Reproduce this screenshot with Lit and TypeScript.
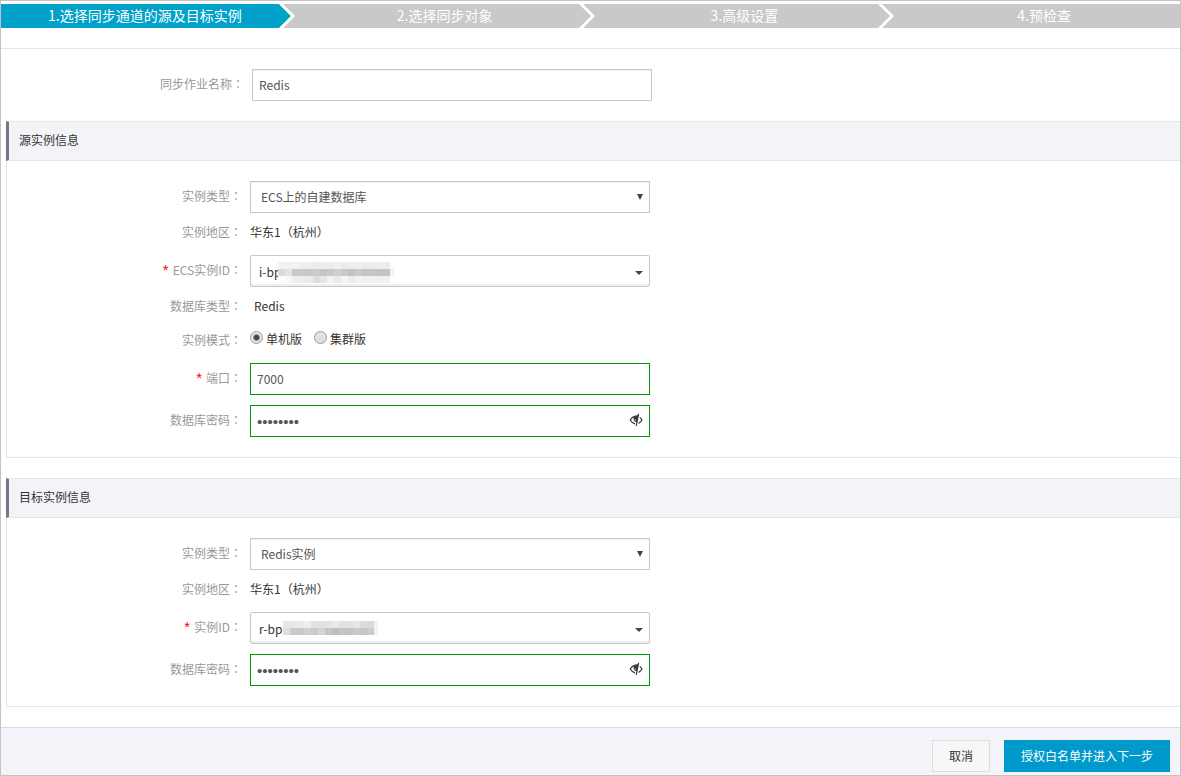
import { LitElement, html, svg, css } from "lit";
import { customElement, property, state } from "lit/decorators.js";

const STEPS = ["1.选择同步通道的源及目标实例", "2.选择同步对象", "3.高级设置", "4.预检查"];

/* Rows of 7px cells that hide the tail of an instance ID. */
const MASK_SOURCE = [
  ["#f3f3f3", "#f1f1f1", "#f2f2f2", "#eeeeee", "#efefef", "#ebebeb", "#eeeeee", "#ebebeb", "#f0f0f0", "#ebebeb", "#eeeeee", "#eeeeee", "#ebebeb", "#ececec", "#eeeeee", "#ebebeb", "#fcfcfc"],
  ["#dadada", "#e4e4e4", "#c8c8c8", "#c9c9c9", "#c6c6c6", "#cbcbcb", "#c4c6c6", "#c8c8c8", "#d0d0d0", "#c9c9c9", "#c4c2be", "#c6caca", "#c0c4c6", "#c6c6c6", "#c4c4c4", "#c4c4c4", "#f2f2f2"],
  ["#fbfbfb", "#f8f8f8", "#eeeeee", "#ececec", "#ebebeb", "#dedede", "#e6e6e6", "#f2f2f2", "#e9e9e9", "#f4f4f4", "#ebebeb", "#f2f2f2", "#f0f0f0", "#f0f0f0", "#f0f0f0", "#f0f0f0", "#fefefe"],
];
const MASK_TARGET = [
  ["#e6e6e6", "#e8e8e8", "#ebebeb", "#eeeeee", "#e2e2e2", "#e0e0e4", "#e4e4e4", "#e9e9e9", "#e2e2e2", "#e2e2e2", "#e6e6e6", "#dcdcdc", "#dadada", "#f4f4f4"],
  ["#dedede", "#cacaca", "#c8c8cc", "#d0d0d0", "#cccac4", "#d4d4d4", "#c6c6ca", "#c4bcb8", "#c6c6c6", "#c2c2c2", "#cacaca", "#c6c6c6", "#cccccc", "#f0f0f0"],
];

@customElement("step-bar")
class StepBar extends LitElement {
  @property({ type: Number }) current = 0;

  static styles = css`
    :host { display: block; overflow: hidden; }
    .steps {
      display: grid;
      grid-template-columns: repeat(4, 1fr);
      margin: 0 -14px 0 -6px;
      padding: 0;
      list-style: none;
    }
    .step {
      position: relative;
      padding-bottom: 2px;
      background: #c9c9c9;
      color: #fff;
      font-size: 14px;
      line-height: 22px;
      text-align: center;
      white-space: nowrap;
    }
    .on { background: #00a2ca; }
    .arrow { position: absolute; top: 0; right: 0; width: 16px; height: 24px; }
    .next { fill: #c9c9c9; }
    .fill { fill: #c9c9c9; }
    .on .fill { fill: #00a2ca; }
    .edge { fill: #fff; }
  `;

  render() {
    return html`<ol class="steps">
      ${STEPS.map(
        (s, i) => html`<li class="step ${i === this.current ? "on" : ""}">
          ${s}${i < STEPS.length - 1
            ? html`<svg class="arrow" viewBox="0 0 16 24" aria-hidden="true">
                <path class="next" d="M0 0h16v24H0z" />
                <path class="fill" d="M0 0l12 12L0 24z" />
                <path class="edge" d="M0 0h4l12 12L4 24H0l12-12z" />
              </svg>`
            : ""}
        </li>`
      )}
    </ol>`;
  }
}

@customElement("app-root")
class AppRoot extends LitElement {
  @state() private mode = "single";

  static styles = css`
    :host {
      display: block;
      box-sizing: border-box;
      min-height: 100vh;
      border: 1px solid #c3c3c3;
      padding-top: 3px;
      background: #fff;
      color: #333;
      font: 12px/28px "Noto Sans CJK SC", sans-serif;
    }
    *, *::before, *::after { box-sizing: border-box; }
    .top { margin-top: 20px; padding: 15px 0; border-top: 1px solid #e1e6eb; }
    .row { display: flex; gap: 8px; min-height: 32px; }
    .label { flex: none; width: 235px; color: #999; text-align: right; white-space: nowrap; }
    .top .label { width: 243px; }
    .wide { font-family: "Noto Sans CJK TC", sans-serif; }
    .star { margin-right: 4px; color: #f00; font-family: "Liberation Sans", sans-serif; font-size: 15px; line-height: 1; }
    .field { padding: 5px 0; }
    .field .label { line-height: 30px; }
    .modes { min-height: 34px; }
    .modes .label, .option { line-height: 32px; }
    .option { line-height: 30px; }
    .inset { padding-left: 4px; }
    .box { position: relative; flex: 0 1 400px; min-width: 0; }
    .input {
      display: block;
      width: 100%;
      height: 32px;
      margin: 0;
      padding: 0 6px 2px;
      border: 1px solid #c8c8c8;
      border-radius: 0;
      outline: 0;
      appearance: none;
      background: #fff;
      box-shadow: inset 0 1px 1px #eee;
      color: #555;
      font: inherit;
    }
    .select { padding: 0 10px; }
    .combo { padding: 2px 8px 0; border-radius: 2px; box-shadow: inset 0 -2px 1px #eee; color: #333; }
    .valid { border-color: #090; box-shadow: none; }
    .secret { padding: 0 6px; font-family: "Liberation Sans", sans-serif; font-size: 15px; }
    .mark { position: absolute; top: 0; right: 0; width: 20px; height: 32px; fill: #444; pointer-events: none; }
    .mask { position: absolute; top: 7px; pointer-events: none; }
    .mask-source { left: 28px; }
    .mask-target { top: 9px; left: 33px; }
    .eye {
      position: absolute;
      top: 8px;
      right: 7px;
      width: 14px;
      height: 14px;
      padding: 0;
      border: 0;
      background: none;
      color: #333;
    }
    .eye svg { display: block; }
    .option { display: flex; gap: 3px; margin-right: 4px; }
    .radio {
      width: 13px;
      height: 13px;
      margin: 7px 0 0;
      border: 1px solid #999;
      border-radius: 50%;
      appearance: none;
      background: linear-gradient(#e6e6e6, #dcdcdc);
    }
    .radio:checked { background: radial-gradient(circle, #444 0 2px, #e6e6e6 4px); }
    .section { margin: 0 0 20px 5px; }
    .head {
      margin: 0;
      padding: 0 0 2px 10px;
      border: solid #e1e6eb;
      border-width: 1px 0;
      border-left: 3px solid #778;
      background: #f3f4f8;
      font-size: 12px;
      font-weight: 400;
      line-height: 36px;
    }
    .body { padding: 15px 0; border: solid #e1e6eb; border-width: 0 0 1px 1px; }
    .foot {
      display: flex;
      justify-content: flex-end;
      gap: 14px;
      padding: 12px 10px 3px;
      border-top: 1px solid #d8dbdf;
      background: #f3f4f9;
    }
    .btn {
      height: 32px;
      padding: 0 16px;
      border: 1px solid #ddd;
      background: #f7f7f7;
      color: #333;
      font: inherit;
    }
    .primary { border-color: #09c; background: #09c; color: #fff; }
  `;

  private label(text: string, id: string, required = false) {
    const body = html`${required ? html`<span class="star">*</span>` : ""}${text}<span class="wide">：</span>`;
    return id ? html`<label class="label" for=${id}>${body}</label>` : html`<span class="label">${body}</span>`;
  }

  private select(id: string, value: string) {
    return html`<div class="row field">
      ${this.label("实例类型", id)}
      <div class="box">
        <select class="input select" id=${id}><option>${value}</option></select>
        <svg class="mark" viewBox="0 0 20 32" aria-hidden="true"><path d="M7 13h6l-3 6z" /></svg>
      </div>
    </div>`;
  }

  private combo(id: string, label: string, value: string, cells: string[][], kind: string) {
    return html`<div class="row field">
      ${this.label(label, id, true)}
      <div class="box">
        <select class="input combo" id=${id}><option>${value}</option></select>
        <svg class="mask ${kind}" width=${cells[0].length * 7 - 3} height=${cells.length * 7} shape-rendering="crispEdges" aria-hidden="true">
          ${cells.map((r, y) => r.map((c, x) => svg`<rect x=${x * 7} y=${y * 7} width="7" height="7" fill=${c} />`))}
        </svg>
        <svg class="mark" viewBox="0 0 20 32" aria-hidden="true"><path d="M5 16h8l-4 4z" /></svg>
      </div>
    </div>`;
  }

  private password(id: string) {
    return html`<div class="row field">
      ${this.label("数据库密码", id)}
      <div class="box">
        <input class="input valid secret" id=${id} type="password" value="password" />
        <button class="eye" type="button" aria-label="显示密码">
          <svg width="14" height="14" viewBox="0 0 14 14" fill="none" stroke="currentColor" stroke-width="1.2">
            <path d="M7.500 2.800C4.500 3 2.500 5 1.200 7c1.200 2 2.600 3.200 4.800 3.800" />
            <path d="M10.800 4.400C12 5.400 12.500 6 13 7c-.8 1.500-1.800 2.600-3.400 3.400" />
            <path d="M9.600 .8L7.200 13" />
            <path d="M4.600 4.200L9.200 1.800 7.600 9.200C5.200 8.800 4 6.600 4.600 4.200z" fill="currentColor" stroke="none" />
            <path d="M6 6.200c0 .8.300 1.200.8 1.500" stroke="#fff" stroke-width=".8" />
          </svg>
        </button>
      </div>
    </div>`;
  }

  private radio(value: string, text: string) {
    return html`<label class="option">
      <input class="radio" type="radio" name="mode" value=${value} .checked=${this.mode === value}
        @change=${() => (this.mode = value)} />
      ${text}
    </label>`;
  }

  private region() {
    return html`<div class="row">
      ${this.label("实例地区", "")}
      <span>华东1<span class="wide">（</span>杭州<span class="wide">）</span></span>
    </div>`;
  }

  render() {
    return html`
      <step-bar></step-bar>
      <div class="top">
        <div class="row field">
          ${this.label("同步作业名称", "job")}
          <div class="box"><input class="input" id="job" type="text" value="Redis" /></div>
        </div>
      </div>
      <section class="section">
        <h2 class="head">源实例信息</h2>
        <div class="body">
          ${this.select("source-type", "ECS上的自建数据库")}
          ${this.region()}
          ${this.combo("source-id", "ECS实例ID", "i-bp", MASK_SOURCE, "mask-source")}
          <div class="row">${this.label("数据库类型", "")}<span class="inset">Redis</span></div>
          <div class="row modes">
            ${this.label("实例模式", "")}${this.radio("single", "单机版")}${this.radio("cluster", "集群版")}
          </div>
          <div class="row field">
            ${this.label("端口", "port", true)}
            <div class="box"><input class="input valid" id="port" type="text" value="7000" /></div>
          </div>
          ${this.password("source-password")}
        </div>
      </section>
      <section class="section">
        <h2 class="head">目标实例信息</h2>
        <div class="body">
          ${this.select("target-type", "Redis实例")}
          ${this.region()}
          ${this.combo("target-id", "实例ID", "r-bp1", MASK_TARGET, "mask-target")}
          ${this.password("target-password")}
        </div>
      </section>
      <footer class="foot">
        <button class="btn" type="button">取消</button>
        <button class="btn primary" type="button">授权白名单并进入下一步</button>
      </footer>
    `;
  }
}
